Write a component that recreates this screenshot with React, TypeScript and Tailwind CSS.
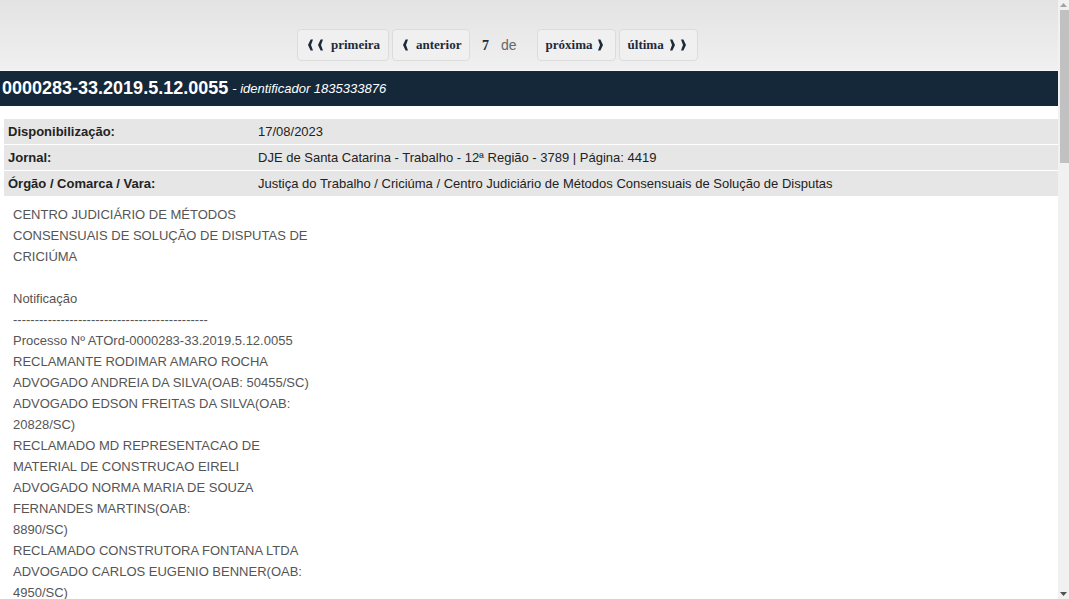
import { Fragment } from 'react'

const ROWS = [
  ['Disponibilização:', '17/08/2023'],
  ['Jornal:', 'DJE de Santa Catarina - Trabalho - 12ª Região - 3789 | Página: 4419'],
  ['Órgão / Comarca / Vara:', 'Justiça do Trabalho / Criciúma / Centro Judiciário de Métodos Consensuais de Solução de Disputas'],
]

const LINES = [
  'CENTRO JUDICIÁRIO DE MÉTODOS',
  'CONSENSUAIS DE SOLUÇÃO DE DISPUTAS DE',
  'CRICIÚMA',
  '',
  'Notificação',
  '---------------------------------------------',
  'Processo Nº ATOrd-0000283-33.2019.5.12.0055',
  'RECLAMANTE RODIMAR AMARO ROCHA',
  'ADVOGADO ANDREIA DA SILVA(OAB: 50455/SC)',
  'ADVOGADO EDSON FREITAS DA SILVA(OAB:',
  '20828/SC)',
  'RECLAMADO MD REPRESENTACAO DE',
  'MATERIAL DE CONSTRUCAO EIRELI',
  'ADVOGADO NORMA MARIA DE SOUZA',
  'FERNANDES MARTINS(OAB:',
  '8890/SC)',
  'RECLAMADO CONSTRUTORA FONTANA LTDA',
  'ADVOGADO CARLOS EUGENIO BENNER(OAB:',
  '4950/SC)',
  '',
  'Intimado(s)/Citado(s):',
  '- RODIMAR AMARO ROCHA',
]

function NavButton({ className, children }: { className: string; children: React.ReactNode }) {
  return (
    <button className={`h-[32px] flex items-center rounded-[4px] border border-[#dcdcdc] bg-[#f0f0f0] text-[#1c2b3a] font-bold text-[13px] font-['Liberation_Serif',serif] ${className}`}>
      {children}
    </button>
  )
}

function Chev({ dir, className = '' }: { dir: 'l' | 'r'; className?: string }) {
  return (
    <svg width="5" height="12" viewBox="0 0 5 12" className={className}>
      {dir === 'l' ? (
        <polygon points="5,0.5 2.6,0.5 0,6 2.6,11.5 5,11.5 3,6" fill="#1c2b3a" />
      ) : (
        <polygon points="0,0.5 2.4,0.5 5,6 2.4,11.5 0,11.5 2,6" fill="#1c2b3a" />
      )}
    </svg>
  )
}

export default function App() {
  return (
    <div className="h-[599px] overflow-hidden flex bg-white font-['Liberation_Sans',Arial,sans-serif]">
      <div className="flex-1 min-w-0">
        {/* pagination */}
        <div className="h-[71px] bg-gradient-to-b from-[#e3e3e3] to-[#f0f0f0] border-b border-[#f7f7f7] flex items-start pt-[29px] pl-[297px]">
          <NavButton className="w-[92px] pl-[10px]">
            <Chev dir="l" />
            <Chev dir="l" className="ml-[5px]" />
            <span className="ml-[8px]">primeira</span>
          </NavButton>
          <NavButton className="w-[78px] ml-[3px] pl-[10px]">
            <Chev dir="l" />
            <span className="ml-[8px]">anterior</span>
          </NavButton>
          <div className="h-[32px] flex items-center pl-[12px] text-[14px]">
            <span className="font-bold font-['Liberation_Serif',serif] text-[#1c2b3a]">7</span>
            <span className="text-[#666] ml-[12px]">de</span>
          </div>
          <NavButton className="w-[79px] ml-[20px] pl-[8px]">
            <span>próxima</span>
            <Chev dir="r" className="ml-[5px]" />
          </NavButton>
          <NavButton className="w-[79px] ml-[3px] pl-[8px]">
            <span>última</span>
            <Chev dir="r" className="ml-[6px]" />
            <Chev dir="r" className="ml-[6px]" />
          </NavButton>
        </div>

        {/* header */}
        <div className="h-[35px] bg-[#15283a] flex items-center px-[2px] text-white">
          <span className="font-bold text-[18px]">0000283-33.2019.5.12.0055</span>
          <span className="italic text-[13px] ml-[4px]">- identificador 1835333876</span>
        </div>

        {/* info table */}
        <div className="mt-[13px] ml-[4px] grid grid-cols-[250px_1fr] gap-y-px text-[13px] text-[#222]">
          {ROWS.map(([k, v]) => (
            <Fragment key={k}>
              <div className="bg-[#e6e6e6] h-[25px] flex items-center pl-[4px] font-bold">{k}</div>
              <div className="bg-[#e6e6e6] h-[25px] flex items-center pl-[4px]">{v}</div>
            </Fragment>
          ))}
        </div>

        {/* body */}
        <div className="pt-[8px] pl-[13px] text-[13px] leading-[21px] text-[#555]">
          {LINES.map((l, i) => (
            <div key={i} className="h-[21px]">{l}</div>
          ))}
        </div>
      </div>

      {/* scrollbar */}
      <div className="w-[11px] shrink-0 bg-[#f1f1f1] flex flex-col items-end">
        <div className="w-full h-[10px] flex items-center justify-center">
          <svg width="7" height="4" viewBox="0 0 7 4"><path d="M3.5 0 L7 4 L0 4 Z" fill="#a3a3a3" /></svg>
        </div>
        <div className="w-[9px] h-[153px] bg-[#c1c1c1]" />
        <div className="flex-1" />
        <div className="w-full h-[10px] flex items-center justify-center">
          <svg width="7" height="4" viewBox="0 0 7 4"><path d="M0 0 L7 0 L3.5 4 Z" fill="#505050" /></svg>
        </div>
      </div>
    </div>
  )
}
